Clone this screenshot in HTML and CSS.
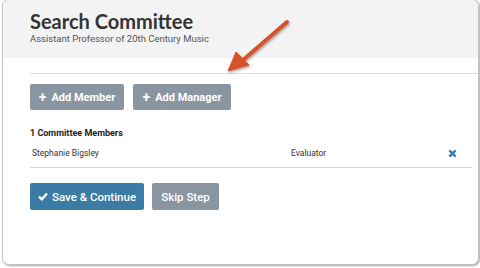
FILE: index.html
```html
<html>
  <head>
    <meta charset="utf-8" />
    <link rel="stylesheet" href="styles.css">
  </head>
  <body>
    <div class="panel">
      <div class="panel__header">
        <h1 class="panel__title">Search Committee</h1>
        <div class="panel__subtitle">Assistant Professor of 20th Century Music</div>
      </div>
      <div class="panel__body">
        <div class="panel__rule"></div>
        <div class="actions">
          <button class="btn btn--gray btn--member" type="button"><span class="btn__icon">+</span> Add Member</button>
          <button class="btn btn--gray btn--manager" type="button"><span class="btn__icon">+</span> Add Manager</button>
        </div>
        <div class="members__title">1 Committee Members</div>
        <div class="members__row">
          <span class="members__name">Stephanie Bigsley</span>
          <span class="members__role">Evaluator</span>
          <svg class="members__remove" width="9" height="9" viewBox="0 0 10 10"><path d="M1.5 1.5 L8.5 8.5 M8.5 1.5 L1.5 8.5" stroke="#3a7dad" stroke-width="2.6" stroke-linecap="butt"/></svg>
        </div>
        <div class="footer">
          <button class="btn btn--blue btn--tall btn--save" type="button"><svg class="btn__check" width="10" height="9" viewBox="0 0 10 9"><path d="M1 4.6 L3.8 7.3 L9 1.6" fill="none" stroke="#fff" stroke-width="2.2"/></svg>Save &amp; Continue</button>
          <button class="btn btn--gray btn--tall btn--skip" type="button">Skip Step</button>
        </div>
      </div>
    </div>
    <!-- callout arrow drawn over the screenshot -->
    <svg class="callout" width="480" height="268" viewBox="0 0 480 268">
      <defs>
        <filter id="shadow" x="-20%" y="-20%" width="140%" height="140%">
          <feDropShadow dx="1" dy="1.5" stdDeviation="1" flood-color="#000" flood-opacity="0.35"/>
        </filter>
      </defs>
      <g filter="url(#shadow)" fill="#d4532b" stroke="#d4532b">
        <line x1="287" y1="22" x2="243" y2="60" stroke-width="4" stroke-linecap="round"/>
        <polygon points="228,71 236,52 249,65" stroke-width="1" stroke-linejoin="round"/>
      </g>
    </svg>
  </body>
</html>
```

FILE: styles.css
```css
body {
  margin: 0;
  background-color: #fff;
  font-family: Roboto, "Liberation Sans", sans-serif;
  color: #333;
}

.panel {
  box-sizing: border-box;
  width: 477px;
  height: 266px;
  margin: -1px 0 0 2px;
  border: 1px solid #c4c4c4;
  border-radius: 7px;
  overflow: hidden;
  background-color: #fff;
  box-shadow: 1px 1px 2px rgba(0, 0, 0, .35);
}

.panel__header {
  box-sizing: border-box;
  height: 58px;
  padding: 9px 0 0 27px;
  background-color: #f3f3f3;
}

.panel__title {
  margin: 0;
  font-family: Lato, sans-serif;
  font-weight: 700;
  font-size: 20px;
  line-height: 24px;
  color: #333;
}

.panel__subtitle {
  margin-top: 0;
  font-size: 9.5px;
  line-height: 12px;
  color: #555;
}

.panel__body {
  padding-left: 27px;
}

.panel__rule {
  margin-top: 15px;
  border-top: 1px solid #dcdcdc;
}

.actions {
  display: flex;
  gap: 9px;
  margin-top: 10px;
}

.btn {
  box-sizing: border-box;
  display: flex;
  align-items: center;
  justify-content: center;
  height: 26px;
  padding: 0;
  border: none;
  border-radius: 2px;
  font-family: Roboto, sans-serif;
  font-weight: 700;
  font-size: 11px;
  white-space: nowrap;
  color: #fff;
  cursor: pointer;
}

.btn--gray {
  background-color: #8a95a2;
}

.btn--blue {
  background-color: #3b7ca5;
}

.btn--member {
  width: 94px;
}

.btn--manager {
  width: 98px;
}

.btn--tall {
  height: 27px;
  font-weight: 500;
  font-size: 11.5px;
}

.btn--save {
  width: 114px;
}

.btn--skip {
  width: 67px;
}

.btn__icon {
  font-size: 14px;
  margin-right: 5px;
}

.btn__check {
  margin-right: 4px;
}

.members__title {
  margin-top: 17px;
  font-size: 9px;
  font-weight: 700;
  line-height: 12px;
  color: #222;
}

.members__row {
  display: flex;
  align-items: center;
  height: 28px;
  margin-right: 6px;
  padding-left: 2px;
  border-bottom: 1px solid #d8d8d8;
  font-size: 8.5px;
  color: #333;
}

.members__name {
  width: 259px;
}

.members__role {
  flex: 1;
}

.members__remove {
  margin-right: 15px;
}

.footer {
  display: flex;
  gap: 8px;
  margin-top: 15px;
}

.callout {
  position: absolute;
  top: 0;
  left: 0;
  pointer-events: none;
}
```
